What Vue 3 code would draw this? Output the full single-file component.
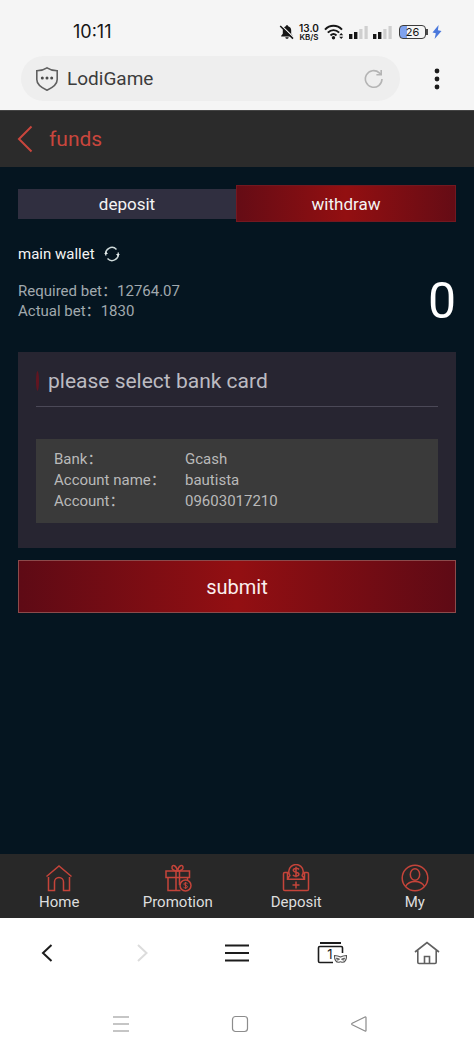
<script setup>
import { ref } from 'vue'

const mode = ref('withdraw')
const modes = ['deposit', 'withdraw']

const bets = [
  { label: 'Required bet', value: '12764.07' },
  { label: 'Actual bet', value: '1830' },
]

const account = [
  { label: 'Bank', value: 'Gcash' },
  { label: 'Account name', value: 'bautista' },
  { label: 'Account', value: '09603017210' },
]
</script>

<template>
  <div class="screen">
    <div class="status">
      <span class="clock">10:11</span>
      <div class="indicators">
        <svg class="bell" width="16" height="16" viewBox="0 0 16 16">
          <path d="M8 1.2c.8 0 1.200.5 1.200 1.100 2 .6 3 2.200 3 4.200v3.200l1.600 2v.8H2.200v-.8l1.600-2V6.500c0-2 1-3.600 3-4.200 0-.6.4-1.100 1.200-1.100zM6.300 13.300h3.400c-.2 1-.8 1.500-1.700 1.500s-1.500-.5-1.700-1.500z" fill="#161616" />
          <path d="M2.200 1.400l12.600 12.200" stroke="#f5f5f5" stroke-width="1.400" />
          <path d="M1.200 2l12.800 12.600" stroke="#161616" stroke-width="1.500" />
        </svg>
        <span class="speed"><b>13.0</b><small>KB/S</small></span>
        <svg class="wifi" width="20" height="16" viewBox="0 0 20 16">
          <g fill="none" stroke="#161616" stroke-width="2">
            <path d="M1 5.600c4.800-5 12.200-5 17 0" />
            <path d="M3.800 8.600c3.400-3.300 8-3.300 11.400 0" />
            <path d="M6.500 11.400c1.900-1.700 4.100-1.700 6 0" />
          </g>
          <circle cx="9.500" cy="13.800" r="1.700" fill="#161616" />
          <path d="M15.200 11.300l2-2.300 2 2.300zM15.200 12.700l2 2.300 2-2.300z" fill="#161616" />
        </svg>
        <svg v-for="n in 2" :key="n" class="signal" width="19" height="14" viewBox="0 0 19 14">
          <path d="M0 9h3.400v5H0zM5 7h3.400v7H5z" fill="#161616" />
          <path d="M10.300 4h3.200v10h-3.200zM15.500 1h3.200v13h-3.200z" fill="#cfcfcf" />
        </svg>
        <span class="battery"><span class="level">26</span></span>
        <svg class="bolt" width="10" height="14" viewBox="0 0 10 14">
          <path d="M6.600 0L.5 7.500l3.300.8L2.600 14l6.900-8-3.600-.7z" fill="#4a78dc" />
        </svg>
      </div>
    </div>

    <div class="browser">
      <div class="address">
        <svg width="24" height="26" viewBox="0 0 24 26" fill="none" stroke="#606060" stroke-width="1.600">
          <path d="M12 1.800c3 2 6.400 2.900 10.200 3v8.700c0 5-4.200 8-10.200 10.700C6 21.500 1.800 18.500 1.800 13.500V4.800c3.800-.1 7.200-1 10.200-3z" />
          <g fill="#4c4c4c" stroke="none">
            <circle cx="7.300" cy="12" r="1.500" /><circle cx="12" cy="12" r="1.500" /><circle cx="16.700" cy="12" r="1.500" />
          </g>
        </svg>
        <span class="site">LodiGame</span>
        <button class="plain" aria-label="Reload">
          <svg width="20" height="20" viewBox="0 0 20 20" fill="none" stroke="#b4b4b4" stroke-width="1.600">
            <path d="M18 10a8.300 8.300 0 1 1-2.700-6.200L17 5.400" />
            <path d="M17.200 1v4.700h-4.800" />
          </svg>
        </button>
      </div>
      <button class="plain more" aria-label="Menu">
        <svg width="6" height="24" viewBox="0 0 6 24" fill="#1b1b1b">
          <circle cx="3" cy="4" r="2.400" /><circle cx="3" cy="12" r="2.400" /><circle cx="3" cy="20" r="2.400" />
        </svg>
      </button>
    </div>

    <header class="heading">
      <button class="plain" aria-label="Back">
        <svg width="16" height="28" viewBox="0 0 16 28" fill="none" stroke="#c9463d" stroke-width="2">
          <path d="M14.500 1.500L2 14l12.500 12.500" />
        </svg>
      </button>
      <h1>funds</h1>
    </header>

    <main class="content">
      <div class="modes">
        <button v-for="m in modes" :key="m" class="mode" :class="{ active: m === mode }" @click="mode = m">{{ m }}</button>
      </div>

      <div class="wallet">
        <span>main wallet</span>
        <button class="plain" aria-label="Refresh balance">
          <svg width="16" height="16" viewBox="0 0 16 16" fill="none" stroke="#cfdada" stroke-width="1.400">
            <path d="M2 9.500A6.200 6.200 0 0 1 12.500 3.500M14 6.500A6.200 6.200 0 0 1 3.500 12.500" />
            <path d="M.2 8l1.800-2.600L4 8zM12 8l2 2.600L15.800 8z" fill="#e3eaea" stroke="none" />
          </svg>
        </button>
      </div>

      <div class="summary">
        <div class="bets">
          <div v-for="b in bets" :key="b.label"><span>{{ b.label }}：</span><span>{{ b.value }}</span></div>
        </div>
        <div class="balance">0</div>
      </div>

      <section class="panel">
        <h2>please select bank card</h2>
        <dl class="card">
          <template v-for="a in account" :key="a.label">
            <dt>{{ a.label }}：</dt>
            <dd>{{ a.value }}</dd>
          </template>
        </dl>
      </section>

      <button class="submit">submit</button>
    </main>

    <nav class="tabs">
      <a href="#home">
        <svg width="28" height="28" viewBox="0 0 28 28">
          <path d="M1.500 12.500L14 2l12.500 10.500M3.500 13v13.500h6V18a4.500 4.500 0 0 1 9 0v8.500h6V13" />
        </svg>
        Home
      </a>
      <a href="#promotion">
        <svg width="28" height="28" viewBox="0 0 28 28">
          <path d="M2 7h23.500v6.500H2zM4 13.500v13h12.500M23.500 13.500V16M12 7v19M15.500 7v14" />
          <path d="M13.500 7C10 7 7.500 5.500 8 3s4.200-2.200 5.500 4c1.300-6.200 5-6.500 5.500-4s-2 4-5.500 4z" />
          <circle cx="21.500" cy="21.500" r="5.500" />
          <path d="M23.500 19.600c-.8-1-3.700-1-3.700.5 0 1.600 3.700.9 3.700 2.700 0 1.500-3 1.500-4 .4M21.600 18v7" class="fine" />
        </svg>
        Promotion
      </a>
      <a href="#deposit">
        <svg width="28" height="28" viewBox="0 0 28 28">
          <path d="M6.500 8.500H2.800A1.300 1.300 0 0 0 1.500 9.800v15.400c0 .8.500 1.300 1.300 1.300h22.400c.8 0 1.300-.5 1.300-1.300V9.800c0-.8-.5-1.300-1.300-1.300h-3.700" />
          <path d="M8.200 12a7.200 7.200 0 1 1 11.600 0M5.500 8.500v6.700h17V8.500M8.200 12c-1 .2-2 1.200-2.200 3.200M19.800 12c1 .2 2 1.200 2.200 3.200" />
          <path d="M17 5.500c-1-1.700-5.700-1.500-5.700.8 0 2.600 5.600 1.300 5.600 4 0 2.300-4.700 2.400-6 .5M14 2.800v10.400M14 17.500v7M10.500 21h7" />
        </svg>
        Deposit
      </a>
      <a href="#my">
        <svg width="28" height="28" viewBox="0 0 28 28">
          <circle cx="14" cy="14" r="12.800" /><ellipse cx="14" cy="10.500" rx="4.700" ry="5.800" />
          <path d="M4.500 22.500c2-3.500 5.500-5 9.500-5s7.500 1.500 9.500 5" />
        </svg>
        My
      </a>
    </nav>

    <nav class="toolbar">
      <button class="plain" aria-label="Previous page">
        <svg width="20" height="20" viewBox="0 0 20 20"><path d="M14.500 2L6 10l8.500 8" stroke-width="2" /></svg>
      </button>
      <button class="plain pale" aria-label="Next page">
        <svg width="20" height="20" viewBox="0 0 20 20"><path d="M6 2l8.500 8L6 18" stroke-width="2" /></svg>
      </button>
      <button class="plain" aria-label="Browser menu">
        <svg width="24" height="20" viewBox="0 0 24 20"><path d="M0 2.500h24M0 10h24M0 17.500h24" stroke-width="2" /></svg>
      </button>
      <button class="plain pages" aria-label="Open pages">
        <svg width="30" height="24" viewBox="0 0 30 24">
          <path d="M3 2h21" stroke-width="2" />
          <path d="M16 21.500H2.800c-.8 0-1.300-.5-1.300-1.300V6.800c0-.8.500-1.300 1.300-1.300h21.400c.8 0 1.300.5 1.300 1.300V12" stroke-width="1.600" />
          <path d="M17.500 14.500c2 .2 4 .6 6 1.600 2-1 4-1.400 6-1.600.2 4-1.500 6.800-4 6.800-1 0-1.400-.6-2-.6s-1 .6-2 .6c-2.500 0-4.200-2.800-4-6.800z" stroke="#555" stroke-width="1.100" />
          <path d="M19.500 17l3 1.200-2 1zM27.500 17l-3 1.200 2 1z" stroke="#555" stroke-width="1" />
        </svg>
        <span class="count">1</span>
      </button>
      <button class="plain house" aria-label="Start page">
        <svg width="26" height="24" viewBox="0 0 26 24">
          <path d="M1 11L13 1.500 25 11M3.800 9v12.300c0 .7.500 1.200 1.200 1.200h16c.7 0 1.200-.5 1.200-1.200V9M10.500 22.500v-7h5v7" stroke-width="1.600" />
        </svg>
      </button>
    </nav>

    <nav class="system">
      <button class="plain" aria-label="Recent apps">
        <svg width="18" height="18" viewBox="0 0 18 18"><path d="M1 2h16M1 9h16M1 16h16" /></svg>
      </button>
      <button class="plain" aria-label="Home screen">
        <svg width="18" height="18" viewBox="0 0 18 18"><rect x="1.500" y="1.500" width="15" height="15" rx="3" /></svg>
      </button>
      <button class="plain" aria-label="Back one screen">
        <svg width="18" height="18" viewBox="0 0 18 18"><path d="M15 2L2.200 8.200c-.7.400-.7 1.200 0 1.600L15 16c.6.300 1 0 1-.6V2.600c0-.6-.4-.9-1-.6z" /></svg>
      </button>
    </nav>
  </div>
</template>

<style>
body {
  background: #fff;
}
</style>

<style scoped>
.screen {
  display: flex;
  flex-direction: column;
  min-height: 100vh;
  background: #fff;
  font-family: Roboto, "Noto Sans CJK SC", sans-serif;
}

.screen * {
  box-sizing: border-box;
}

button {
  font: inherit;
  border: 0;
  border-radius: 0;
  cursor: pointer;
}

.plain {
  display: flex;
  align-items: center;
  justify-content: center;
  padding: 0;
  background: none;
}

svg {
  display: block;
  flex: none;
}

.status {
  display: flex;
  align-items: center;
  justify-content: space-between;
  height: 56px;
  padding: 8px 32px 0 73px;
  background: #f5f5f5;
  color: #161616;
}

.clock {
  font: 400 18px/20px Inter, sans-serif;
}

.indicators {
  display: flex;
  align-items: center;
}

.speed {
  display: flex;
  flex-direction: column;
  align-items: center;
  width: 20px;
  margin: 0 5px 0 4px;
  font-family: Inter, sans-serif;
}

.speed b {
  font-size: 10px;
  line-height: 10px;
  font-weight: 600;
}

.speed small {
  font-size: 8px;
  line-height: 8px;
  font-weight: 600;
}

.signal {
  margin-left: 5px;
}

.battery {
  display: flex;
  align-items: center;
  margin: 0 4px 0 7px;
}

.battery::after {
  content: "";
  width: 2px;
  height: 6px;
  background: #4a4a4a;
}

.level {
  width: 27px;
  height: 14px;
  border: 1px solid #3c3c3c;
  border-radius: 4px;
  background: linear-gradient(90deg, #7fa2ee 30%, #f5f5f5 30%);
  font: 400 11px/12px Inter, sans-serif;
  text-align: center;
}

.browser {
  display: flex;
  align-items: center;
  height: 54px;
  padding: 0 32px 9px 21px;
  background: #f5f5f5;
}

.address {
  flex: 1;
  display: flex;
  align-items: center;
  height: 45px;
  padding: 0 16px 0 14px;
  border-radius: 23px;
  background: #eee;
}

.site {
  flex: 1;
  margin-left: 8px;
  font-size: 19px;
  line-height: 24px;
  color: #3c3c3c;
}

.more {
  width: 10px;
  margin-left: 32px;
}

.heading {
  display: flex;
  align-items: center;
  gap: 16px;
  height: 57px;
  padding: 0 17px;
  background: #2b2b2b;
  border-top: 1px solid #444;
}

.heading h1 {
  margin: 0;
  font-size: 21px;
  line-height: 28px;
  font-weight: 400;
  color: #c9463d;
}

.content {
  flex: 1;
  padding: 18px 18px 24px;
  background: #051520;
}

.modes {
  display: flex;
  align-items: center;
}

.mode {
  flex: 1;
  height: 30px;
  padding: 0;
  background: #302f40;
  color: #f4f4f4;
  font-size: 17px;
  line-height: 24px;
}

.mode.active {
  height: 37px;
  border: 1px solid #731820;
  background: linear-gradient(90deg, #650c15, #930f11 50%, #650c15);
}

.wallet {
  display: flex;
  align-items: center;
  gap: 9px;
  margin-top: 22px;
  font-size: 15px;
  line-height: 20px;
  color: #f4f4f4;
}

.summary {
  display: flex;
  align-items: center;
  justify-content: space-between;
  margin-top: 12px;
  color: #a1a9ae;
  font-size: 15px;
  line-height: 20px;
}

.balance {
  font-size: 50px;
  line-height: 50px;
  color: #fff;
}

.panel {
  margin-top: 26px;
  padding: 14px 18px 25px;
  background: #272531;
}

.panel h2 {
  display: flex;
  align-items: center;
  gap: 9px;
  margin: 0;
  padding-bottom: 10px;
  border-bottom: 1px solid #4b4957;
  font-size: 21px;
  line-height: 30px;
  font-weight: 400;
  color: #bcbbc1;
}

.panel h2::before {
  content: "";
  width: 3px;
  height: 20px;
  border-radius: 50%;
  background: #621520;
}

.card {
  display: grid;
  grid-template-columns: 131px 1fr;
  margin: 32px 0 0;
  padding: 10px 18px 11px;
  background: #3a3a3a;
  color: #b9b9b9;
  font-size: 15px;
  line-height: 21px;
}

.card dd {
  margin: 0;
}

.submit {
  display: block;
  width: 100%;
  height: 53px;
  margin-top: 12px;
  border: 1px solid #8c4a4b;
  background: linear-gradient(90deg, #5e0a15, #930f12 50%, #5e0a15);
  color: #fbeeee;
  font-size: 20px;
  line-height: 24px;
}

.tabs {
  display: grid;
  grid-template-columns: repeat(4, 1fr);
  height: 64px;
  padding-top: 10px;
  background: #282828;
}

.tabs a {
  display: flex;
  flex-direction: column;
  align-items: center;
  color: #dedede;
  font-size: 15px;
  line-height: 21px;
  text-decoration: none;
}

.tabs svg {
  fill: none;
  stroke: #c5443a;
  stroke-width: 1.5;
}

.tabs .fine {
  stroke-width: 1;
}

.toolbar {
  display: grid;
  grid-template-columns: repeat(5, 1fr);
  height: 70px;
  background: #fff;
}

.toolbar svg {
  fill: none;
  stroke: #1c1c1c;
}

.toolbar .pale svg {
  stroke: #dcdcdc;
}

.toolbar .house svg {
  stroke: #606060;
}

.pages {
  position: relative;
}

.count {
  position: absolute;
  inset: 0;
  padding-right: 4px;
  font-family: Inter, sans-serif;
  font-size: 13px;
  line-height: 73px;
  text-align: center;
  color: #1c1c1c;
}

.system {
  display: grid;
  grid-template-columns: repeat(3, 1fr);
  height: 65px;
  padding: 7px 56px 0 62px;
  background: #fff;
}

.system button {
  height: 58px;
}

.system svg {
  fill: none;
  stroke: #8c8c8c;
  stroke-width: 1.2;
}
</style>
